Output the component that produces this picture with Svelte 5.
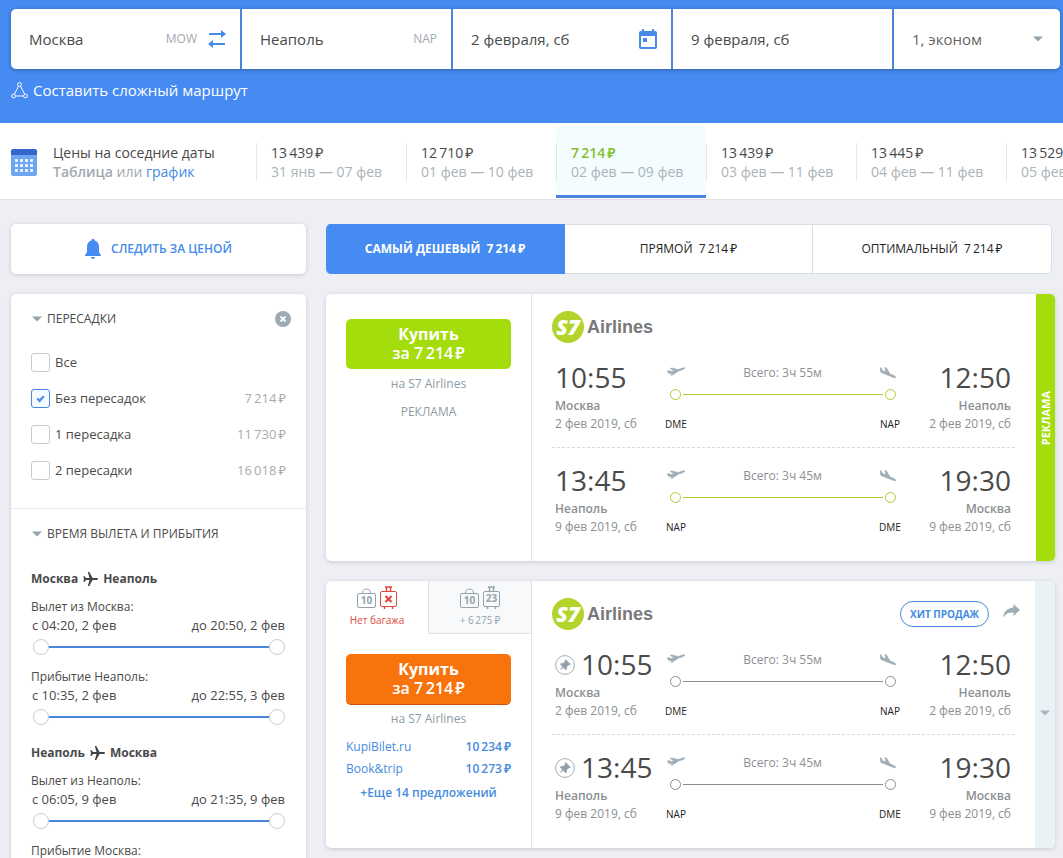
<script>
  const dates = [
    { price: '13 439', range: '31 янв — 07 фев' },
    { price: '12 710', range: '01 фев — 10 фев' },
    { price: '7 214', range: '02 фев — 09 фев', active: true },
    { price: '13 439', range: '03 фев — 11 фев' },
    { price: '13 445', range: '04 фев — 11 фев' },
    { price: '13 529', range: '05 фев — 11 фев' }
  ];

  let stops = $state([
    { label: 'Все', price: '', checked: false },
    { label: 'Без пересадок', price: '7 214', checked: true },
    { label: '1 пересадка', price: '11 730', checked: false },
    { label: '2 пересадки', price: '16 018', checked: false }
  ]);

  const times = [
    {
      from: 'Москва',
      to: 'Неаполь',
      ranges: [
        { title: 'Вылет из Москва:', min: 'с 04:20, 2 фев', max: 'до 20:50, 2 фев' },
        { title: 'Прибытие Неаполь:', min: 'с 10:35, 2 фев', max: 'до 22:55, 3 фев' }
      ]
    },
    {
      from: 'Неаполь',
      to: 'Москва',
      ranges: [
        { title: 'Вылет из Неаполь:', min: 'с 06:05, 9 фев', max: 'до 21:35, 9 фев' },
        { title: 'Прибытие Москва:' }
      ]
    }
  ];

  let sort = $state(0);
  const sorts = ['САМЫЙ ДЕШЕВЫЙ', 'ПРЯМОЙ', 'ОПТИМАЛЬНЫЙ'];

  const segments = [
    { dep: '10:55', arr: '12:50', from: 'Москва', to: 'Неаполь', date: '2 фев 2019, сб', a: 'DME', b: 'NAP', total: '3ч 55м' },
    { dep: '13:45', arr: '19:30', from: 'Неаполь', to: 'Москва', date: '9 фев 2019, сб', a: 'NAP', b: 'DME', total: '3ч 45м' }
  ];

  const offers = [
    { agent: 'KupiBilet.ru', price: '10 234' },
    { agent: 'Book&trip', price: '10 273' }
  ];
</script>

{#snippet rub(value)}<span class="price">{value.replace(' ', '\u2009')}<span class="rub">₽</span></span>{/snippet}

{#snippet caret()}
  <svg class="caret" width="10" height="6" viewBox="0 0 10 6" aria-hidden="true"><path d="M0 .5h10L5 5.500z" fill="currentColor" /></svg>
{/snippet}

{#snippet bag(label)}
  <svg width="19" height="21" viewBox="0 0 19 21" aria-hidden="true">
    <rect x=".5" y="5.500" width="18" height="14" rx="1.500" fill="none" stroke="currentColor" />
    <path d="M5.500 5.500c0-3 1.500-4.500 4-4.500s4 1.500 4 4.500" fill="none" stroke="currentColor" />
    <text x="9.500" y="16" text-anchor="middle">{label}</text>
  </svg>
{/snippet}

{#snippet suitcase(label)}
  <svg width="17" height="24" viewBox="0 0 17 24" aria-hidden="true">
    <rect x=".5" y="5.500" width="16" height="15" rx="1.500" fill="none" stroke="currentColor" />
    <path d="M5 1h7M6.500 1v4.500M10.500 1v4.500M4.500 21v2M12.500 21v2" fill="none" stroke="currentColor" stroke-width="1.500" />
    {#if label}
      <text x="8.500" y="16" text-anchor="middle">{label}</text>
    {:else}
      <path d="M5.500 10l6 6M11.500 10l-6 6" stroke="currentColor" stroke-width="2.200" />
    {/if}
  </svg>
{/snippet}

{#snippet ticket(ad)}
  <article class="ticket">
    <div class="buy-col">
      {#if !ad}
        <div class="bags">
          <button class="bag-tab none">
            <span class="bag-icons"><span class="gray">{@render bag('10')}</span>{@render suitcase('')}</span>
            Нет багажа
          </button>
          <button class="bag-tab extra">
            <span class="bag-icons">{@render bag('10')}{@render suitcase('23')}</span>
            <span>+ {@render rub('6 275')}</span>
          </button>
        </div>
      {/if}
      <div class="buy-box" class:ad>
        <button class="buy" class:ad><b>Купить</b><span>за {@render rub('7 214')}</span></button>
        <p class="seller">на S7 Airlines</p>
        {#if ad}
          <p class="ad-note">РЕКЛАМА</p>
        {:else}
          <ul class="offers">
            {#each offers as o}
              <li><a href="#top">{o.agent}</a><a href="#top" class="semi">{@render rub(o.price)}</a></li>
            {/each}
          </ul>
          <a href="#top" class="more">+Еще 14 предложений</a>
        {/if}
      </div>
    </div>

    <div class="info" class:ad>
      <header class="info-head">
        <div class="logo"><span class="s7"><i>S7</i></span><span class="air">Airlines</span></div>
        {#if !ad}
          <div class="head-right">
            <span class="hit">ХИТ ПРОДАЖ</span>
            <button class="plain share" aria-label="Поделиться">
              <svg width="17" height="14" viewBox="0 0 17 14"><path d="M10.500 0L17 6l-6.500 6V8.500C6 8.300 2.500 9.500 0 13.500 .6 8 4.500 4 10.500 3.600z" fill="#9fadb7" /></svg>
            </button>
          </div>
        {/if}
      </header>
      {#each segments as s}
        <section class="segment">
          <div class="end">
            <div class="time">
              {#if !ad}
                <svg width="20" height="20" viewBox="0 0 20 20" aria-hidden="true">
                  <circle cx="10" cy="10" r="9.400" fill="none" stroke="#9fadb7" />
                  <path d="M10.700 4.500l4.800 4.800-1.100.7-.8-.2-2 2.200.1 2-.9.900-2.400-2.400L5.300 14.700l2.200-3.200L5.100 9.200l.9-.9 2 .1 2.200-2-.2-.8z" fill="#8f9eaa" stroke="#8f9eaa" stroke-width=".4" />
                </svg>
              {/if}{s.dep}
            </div>
            <div class="city">{s.from}</div>
            <div class="date">{s.date}</div>
          </div>
          <div class="path" class:ad>
            <div class="path-top">
              <svg class="plane" width="18" height="10" viewBox="0 0 18 10" aria-hidden="true"><path d="M.4 3.900L1.600 3.500 4 4.600 7.200 3.700 3.200 1.500 5 .9 11 2.600 15.600 1C16.900.5 17.600.6 17.700 1c.1.500-.8 1.200-1.700 1.600L11.600 4.100 5.600 7.900 3.900 8.300 6.500 5.900 3.500 6.700C2.500 6.900 1.900 6.700 1.400 6z" /></svg>
              <span>Всего: {s.total}</span>
              <svg class="plane" width="16" height="12" viewBox="0 0 16 12" aria-hidden="true"><path d="M.3.600l1.100.7 1.200 2.400 3.300 1.300L4.900.4 6.500 1 9.900 6.700 14.300 8.700c1.100.5 1.500 1.300 1.400 1.700-.2.500-1.100.5-2.100.1L2.300 6.100C1 5.600.4 4.900.4 3.900z" /></svg>
            </div>
            <div class="path-line"><i></i><b></b><i></i></div>
            <div class="path-codes"><span>{s.a}</span><span>{s.b}</span></div>
          </div>
          <div class="end right">
            <div class="time">{s.arr}</div>
            <div class="city">{s.to}</div>
            <div class="date">{s.date}</div>
          </div>
        </section>
      {/each}
    </div>

    {#if ad}
      <div class="side ad"><span>РЕКЛАМА</span></div>
    {:else}
      <button class="side" aria-label="Подробнее">{@render caret()}</button>
    {/if}
  </article>
{/snippet}

<div class="page" id="top">
  <header class="search">
    <form class="form">
      <label class="cell">
        <input value="Москва" aria-label="Откуда" /><span class="code">MOW</span>
        <button type="button" class="plain" aria-label="Поменять местами">
          <svg width="18" height="18" viewBox="0 0 18 18"><path d="M1 3h12V0l5 4-5 4V5H1zM17 15H5v3l-5-4 5-4v3h12z" fill="#468be9" /></svg>
        </button>
      </label>
      <label class="cell"><input value="Неаполь" aria-label="Куда" /><span class="code">NAP</span></label>
      <label class="cell">
        <input value="2 февраля, сб" aria-label="Туда" />
        <svg class="cal" width="18" height="20" viewBox="0 0 18 20" aria-hidden="true"><path fill-rule="evenodd" d="M3 0h2v2h8V0h2v2h1a2 2 0 0 1 2 2v14a2 2 0 0 1-2 2H2a2 2 0 0 1-2-2V4a2 2 0 0 1 2-2h1zM2 7v11h14V7zM4 9h4v4H4z" fill="#468be9" /></svg>
      </label>
      <label class="cell"><input value="9 февраля, сб" aria-label="Обратно" /></label>
      <label class="cell pax">
        <select aria-label="Пассажиры и класс"><option>1, эконом</option></select>
        {@render caret()}
      </label>
    </form>
    <a class="complex" href="#top">
      <svg width="17" height="17" viewBox="0 0 17 17" aria-hidden="true" fill="none" stroke="#fff"><circle cx="8.500" cy="2.500" r="1.900" /><circle cx="2.500" cy="14" r="1.900" /><circle cx="14.500" cy="14" r="1.900" /><path d="M7.500 4.200L3.400 12.200M9.500 4.200l4.100 8M4.500 14h8" /></svg>
      Составить сложный маршрут
    </a>
  </header>

  <nav class="strip">
    <div class="strip-title">
      <svg width="26" height="27" viewBox="0 0 26 27" aria-hidden="true">
        <rect width="26" height="27" rx="2.500" fill="#6ea6f2" />
        <path d="M0 6V2.500A2.500 2.500 0 0 1 2.500 0h21A2.500 2.500 0 0 1 26 2.500V6z" fill="#3367ce" />
        {#each [10, 15, 20] as y}
          {#each [4, 9, 14, 19] as x}
            <rect {x} {y} width="3" height="3" fill="#e4f2ff" />
          {/each}
        {/each}
      </svg>
      <div>
        <div>Цены на соседние даты</div>
        <div class="t2"><b>Таблица</b> или <a href="#top">график</a></div>
      </div>
    </div>
    <div class="dates">
      {#each dates as d}
        <button class="day" class:active={d.active}>
          <span class="day-in">{@render rub(d.price)}<span class="range">{d.range}</span></span>
        </button>
      {/each}
    </div>
  </nav>

  <div class="body">
    <aside>
      <button class="watch">
        <svg width="16" height="20" viewBox="0 0 16 20" aria-hidden="true"><path d="M8 0c1 0 1.600.6 1.700 1.400C12.300 2.200 14 4.500 14 7.500V13l2 3.500v.5H0v-.5L2 13V7.500c0-3 1.700-5.300 4.300-6.100C6.400.6 7 0 8 0zM6 18h4c0 1.200-.9 2-2 2s-2-.8-2-2z" fill="#458bf1" /></svg>
        СЛЕДИТЬ ЗА ЦЕНОЙ
      </button>

      <div class="filters">
        <section>
          <div class="f-head">
            <button class="plain f-toggle">{@render caret()}ПЕРЕСАДКИ</button>
            <button class="plain clear" aria-label="Сбросить">
              <svg width="16" height="16" viewBox="0 0 16 16"><circle cx="8" cy="8" r="8" fill="#9dabb5" /><path d="M5.500 5.500l5 5M10.500 5.500l-5 5" stroke="#fff" stroke-width="1.800" /></svg>
            </button>
          </div>
          {#each stops as s}
            <label class="check">
              <input type="checkbox" bind:checked={s.checked} />
              <span>{s.label}</span>
              {#if s.price}<span class="c-price">{@render rub(s.price)}</span>{/if}
            </label>
          {/each}
        </section>
        <section class="times">
          <div class="f-head">
            <button class="plain f-toggle">{@render caret()}ВРЕМЯ ВЫЛЕТА И ПРИБЫТИЯ</button>
          </div>
          {#each times as t}
            <h3>
              {t.from}
              <svg width="15" height="14" viewBox="0 0 15 14" aria-hidden="true"><path d="M15 7c0 .6-.7 1-1.500 1H9.600l-3.300 6H4.800l1.700-6H3L1.600 9.700H.3L1 7 .3 4.300h1.300L3 6h3.500L4.800 0h1.500l3.300 6h3.900c.8 0 1.500.4 1.500 1z" fill="#444" /></svg>
              {t.to}
            </h3>
            {#each t.ranges as r}
              <div class="time-range">
                <div>{r.title}</div>
                {#if r.min}
                  <div class="ends"><span>{r.min}</span><span>{r.max}</span></div>
                  <div class="slider">
                    <input type="range" value="0" aria-label={r.min} />
                    <input type="range" value="100" aria-label={r.max} />
                  </div>
                {/if}
              </div>
            {/each}
          {/each}
        </section>
      </div>
    </aside>

    <main>
      <div class="sorts">
        {#each sorts as s, i}
          <button class:on={sort === i} onclick={() => (sort = i)}>{s}&nbsp; {@render rub('7 214')}</button>
        {/each}
      </div>
      {@render ticket(true)}
      {@render ticket(false)}
    </main>
  </div>
</div>

<style>
  :global(body) {
    background: #edeff4;
  }
  .page {
    height: 100vh;
    overflow: hidden;
    font: 13px/18px 'Open Sans', 'Noto Sans', sans-serif;
    color: #4a4a4a;
  }
  .page :global(*) {
    box-sizing: border-box;
  }
  button,
  input,
  select {
    font: inherit;
    color: inherit;
    margin: 0;
  }
  button {
    cursor: pointer;
    border: 0;
    padding: 0;
    background: none;
  }
  a {
    color: #468be0;
    text-decoration: none;
  }
  p,
  ul,
  h3 {
    margin: 0;
    padding: 0;
  }
  svg {
    display: block;
    flex: none;
  }
  .plain {
    display: flex;
    align-items: center;
  }
  .price {
    white-space: nowrap;
  }
  .rub {
    margin-left: 2px;
  }
  .caret {
    color: #94a3ac;
  }

  .search {
    background: #458bf1;
    height: 123px;
    padding: 9px 3px 0 11px;
  }
  .form {
    display: grid;
    grid-template-columns: 229fr 209fr 218fr 219fr 166fr;
    gap: 2px;
    height: 60px;
    border-radius: 5px;
    overflow: hidden;
    background: #4a87dc;
    box-shadow: 0 1px 4px rgba(0, 0, 0, 0.3);
  }
  .cell {
    display: flex;
    align-items: center;
    background: #fff;
    padding: 0 14px 0 18px;
    min-width: 0;
    font-size: 15px;
  }
  .cell input {
    flex: 1;
    min-width: 0;
    border: 0;
    padding: 0;
    outline: 0;
    background: none;
  }
  .code {
    font-size: 12px;
    color: #9fa9b1;
  }
  .code + .plain {
    margin-left: 11px;
  }
  .pax {
    padding-right: 17px;
  }
  .pax select {
    flex: 1;
    appearance: none;
    border: 0;
    background: none;
    padding: 0;
    color: #666;
  }
  .complex {
    display: inline-flex;
    align-items: center;
    gap: 5px;
    margin-top: 11px;
    height: 20px;
    font-size: 15px;
    color: #fff;
  }

  .strip {
    display: flex;
    height: 77px;
    background: #fff;
    border-bottom: 1px solid #dfe1e5;
    padding-left: 11px;
    overflow: hidden;
    font-size: 14px;
    line-height: 19px;
  }
  .strip-title {
    flex: none;
    width: 245px;
    display: flex;
    gap: 16px;
    align-items: center;
    padding-top: 2px;
  }
  .t2 {
    color: #a0a9b1;
  }
  .t2 b {
    font-weight: 600;
  }
  .dates {
    display: flex;
    padding-top: 3px;
  }
  .day {
    flex: none;
    width: 150px;
    height: 72px;
    display: flex;
    align-items: center;
    text-align: left;
    border-bottom: 3px solid transparent;
    padding-top: 3px;
  }
  .day-in {
    display: block;
    border-left: 1px solid #e3e6ea;
    padding-left: 14px;
    white-space: nowrap;
  }
  .range {
    display: block;
    color: #abb3b9;
  }
  .day.active {
    background: #f3fdff;
    border-bottom-color: #4a87dc;
  }
  .day.active .price {
    color: #84bd2d;
    font-weight: 600;
  }

  .body {
    display: flex;
    gap: 20px;
    padding: 24px 8px 0 11px;
  }
  aside {
    flex: none;
    width: 295px;
  }
  main {
    flex: 1;
    min-width: 0;
  }
  .watch,
  .filters,
  .ticket {
    background: #fff;
    border-radius: 5px;
    box-shadow: 0 1px 4px rgba(0, 0, 0, 0.16);
  }
  .watch {
    display: flex;
    align-items: center;
    justify-content: center;
    gap: 10px;
    width: 100%;
    height: 50px;
    font-size: 12px;
    font-weight: 600;
    color: #458bea;
  }
  .filters {
    margin-top: 20px;
  }
  .filters section {
    padding: 13px 20px 20px;
  }
  .filters .times {
    border-top: 1px solid #e9ebee;
    font-size: 12px;
  }
  .f-head {
    display: flex;
    justify-content: space-between;
    height: 24px;
    margin-bottom: 13px;
  }
  .f-toggle {
    gap: 5px;
    padding-left: 1px;
    font-size: 12px;
  }
  .clear {
    margin-right: -5px;
    padding: 0;
  }
  .check {
    display: flex;
    align-items: center;
    gap: 5px;
    height: 36px;
  }
  .check input {
    appearance: none;
    width: 19px;
    height: 19px;
    border: 1px solid #c6ccd0;
    border-radius: 3px;
    background: #fff;
  }
  .check input:checked {
    border-color: #4a87dc;
    background: #f3fbff
      url("data:image/svg+xml,%3Csvg xmlns='http://www.w3.org/2000/svg' viewBox='0 0 17 17'%3E%3Cpath d='M5.300 8.500l2.300 2.300 4.200-4.500' fill='none' stroke='%23458bea' stroke-width='2.200'/%3E%3C/svg%3E");
  }
  .c-price {
    margin-left: auto;
    color: #a6abae;
  }
  .times h3 {
    display: flex;
    align-items: center;
    gap: 5px;
    padding: 7px 0 9px;
    font-size: 12px;
    line-height: 18px;
  }
  .times .f-head {
    margin-bottom: 17px;
  }
  .time-range {
    line-height: 19px;
    margin-bottom: 12px;
  }
  .ends {
    display: flex;
    justify-content: space-between;
    padding: 0 1px;
    font-size: 13px;
  }
  .slider {
    display: grid;
    height: 16px;
    margin: 4px 1px 0 2px;
    background: linear-gradient(#4a87dc, #4a87dc) center / calc(100% - 16px) 2px no-repeat;
  }
  .slider input {
    grid-area: 1 / 1;
    appearance: none;
    width: 100%;
    height: 16px;
    background: none;
    pointer-events: none;
  }
  .slider input::-webkit-slider-thumb {
    appearance: none;
    pointer-events: auto;
    width: 16px;
    height: 16px;
    border: 1px solid #c9ced2;
    border-radius: 50%;
    background: #fff;
  }

  .sorts {
    display: grid;
    grid-template-columns: 239fr 248fr 239fr;
    height: 50px;
    margin: 0 3px 20px 0;
    border-radius: 5px;
    overflow: hidden;
    font-size: 12px;
  }
  .sorts button {
    background: #fff;
    color: #222;
    border: 1px solid #d9dee2;
    border-left-width: 0;
  }
  .sorts button:last-child {
    border-radius: 0 5px 5px 0;
  }
  .sorts .on {
    background: #458bf1;
    border-color: #458bf1;
    color: #fff;
    font-weight: 700;
  }

  .ticket {
    display: flex;
    min-height: 267px;
    margin-bottom: 20px;
    overflow: hidden;
  }
  .buy-col {
    flex: none;
    width: 206px;
    border-right: 1px solid #e1e5e9;
  }
  .bags {
    display: flex;
    height: 53px;
    font-size: 10px;
    line-height: 14px;
  }
  .bag-tab {
    flex: 1;
    display: flex;
    flex-direction: column;
    align-items: center;
    gap: 3px;
    padding-top: 5px;
    color: #94a3ac;
  }
  .bag-tab.none {
    color: #e0483e;
  }
  .bag-tab.extra {
    background: #f7f9fb;
    border-left: 1px solid #dde3e8;
    border-bottom: 1px solid #dde3e8;
  }
  .bag-icons {
    display: flex;
    align-items: center;
    gap: 4px;
  }
  .bag-icons text {
    font-size: 10px;
    font-weight: 700;
    fill: currentColor;
  }
  .gray {
    color: #94a3ac;
  }
  .buy-box {
    padding: 20px 20px 0;
    text-align: center;
    font-size: 12px;
    color: #8d9ba5;
  }
  .buy-box.ad {
    padding-top: 25px;
  }
  .buy {
    display: flex;
    flex-direction: column;
    align-items: center;
    justify-content: center;
    width: 100%;
    height: 51px;
    border-radius: 5px;
    background: #f9730c;
    border-bottom: 1px solid #c9560a;
    color: #fff;
    font-size: 16px;
    line-height: 19px;
  }
  .buy.ad {
    height: 50px;
    background: #a5dc0c;
    border-bottom: 0;
  }
  .buy span {
    font-weight: 600;
  }
  .seller {
    margin-top: 5px;
  }
  .buy-box.ad .seller {
    margin-top: 6px;
  }
  .ad-note {
    margin-top: 10px;
  }
  .offers {
    list-style: none;
    margin-top: 8px;
  }
  .offers li {
    display: flex;
    justify-content: space-between;
    line-height: 22px;
  }
  .semi,
  .more {
    font-weight: 600;
  }
  .more {
    line-height: 26px;
  }

  .info {
    flex: 1;
    min-width: 0;
    padding: 0 20px;
  }
  .info.ad {
    padding-right: 21px;
  }
  .info-head {
    display: flex;
    justify-content: space-between;
    align-items: center;
    height: 51px;
    padding-top: 15px;
  }
  .logo {
    display: flex;
    align-items: center;
    gap: 3px;
  }
  .s7 {
    display: grid;
    place-items: center;
    width: 32px;
    height: 32px;
    border-radius: 50%;
    background: #b3d42b;
    color: #fff;
    font-weight: 800;
    font-size: 21px;
  }
  .air {
    font: bold 18px/24px 'Liberation Sans', sans-serif;
    color: #77787b;
  }
  .head-right {
    display: flex;
    align-items: center;
    gap: 14px;
    margin-right: -5px;
  }
  .hit {
    border: 1px solid #4a87dc;
    border-radius: 13px;
    padding: 0 9px;
    line-height: 24px;
    font-size: 10px;
    font-weight: 700;
    color: #468be0;
  }
  .share {
    padding-bottom: 6px;
  }
  .segment {
    display: flex;
    height: 103px;
    padding: 14px 4px 0 3px;
    color: #8c8f92;
    font-size: 12px;
  }
  .segment:not(:last-child) {
    border-bottom: 1px dashed #d6dadd;
  }
  .end {
    flex: none;
    width: 110px;
    white-space: nowrap;
  }
  .end.right {
    text-align: right;
  }
  .right .time {
    justify-content: flex-end;
  }
  .time {
    display: flex;
    align-items: center;
    gap: 6px;
    margin-bottom: 1px;
    font-size: 28px;
    line-height: 37px;
    color: #4a4a4a;
  }
  .city {
    font-weight: 600;
  }
  .path {
    flex: 1;
    padding-top: 5px;
    color: #8c8f92;
  }
  .path-top {
    display: flex;
    justify-content: space-between;
    padding: 0 5px 0 2px;
    height: 18px;
  }
  .plane {
    margin-top: 3px;
    fill: #9fadb7;
    stroke: #9fadb7;
    stroke-width: 0.6px;
  }
  .path-line {
    display: flex;
    align-items: center;
    gap: 2px;
    margin: 7px 5px 0;
  }
  .path-line i {
    width: 11px;
    height: 11px;
    border: 1px solid currentColor;
    border-radius: 50%;
  }
  .path-line b {
    flex: 1;
    height: 1px;
    background: currentColor;
  }
  .path.ad .path-line {
    color: #a8cf2f;
  }
  .path-codes {
    display: flex;
    justify-content: space-between;
    margin-top: 15px;
    font-size: 10px;
    color: #222;
  }
  .path-codes span {
    width: 22px;
    display: flex;
    justify-content: center;
  }
  .side {
    flex: none;
    width: 20px;
    display: flex;
    align-items: center;
    justify-content: center;
    background: #eaf2f6;
    padding-bottom: 4px;
  }
  .side .caret,
  .side :global(.caret) {
    color: #a9b6be;
  }
  .side.ad {
    width: 19px;
    padding-bottom: 18px;
    background: #a5dc0c;
    color: #fff;
    font-size: 11px;
    font-weight: 700;
  }
  .side.ad span {
    writing-mode: vertical-rl;
    transform: rotate(180deg);
  }
</style>
